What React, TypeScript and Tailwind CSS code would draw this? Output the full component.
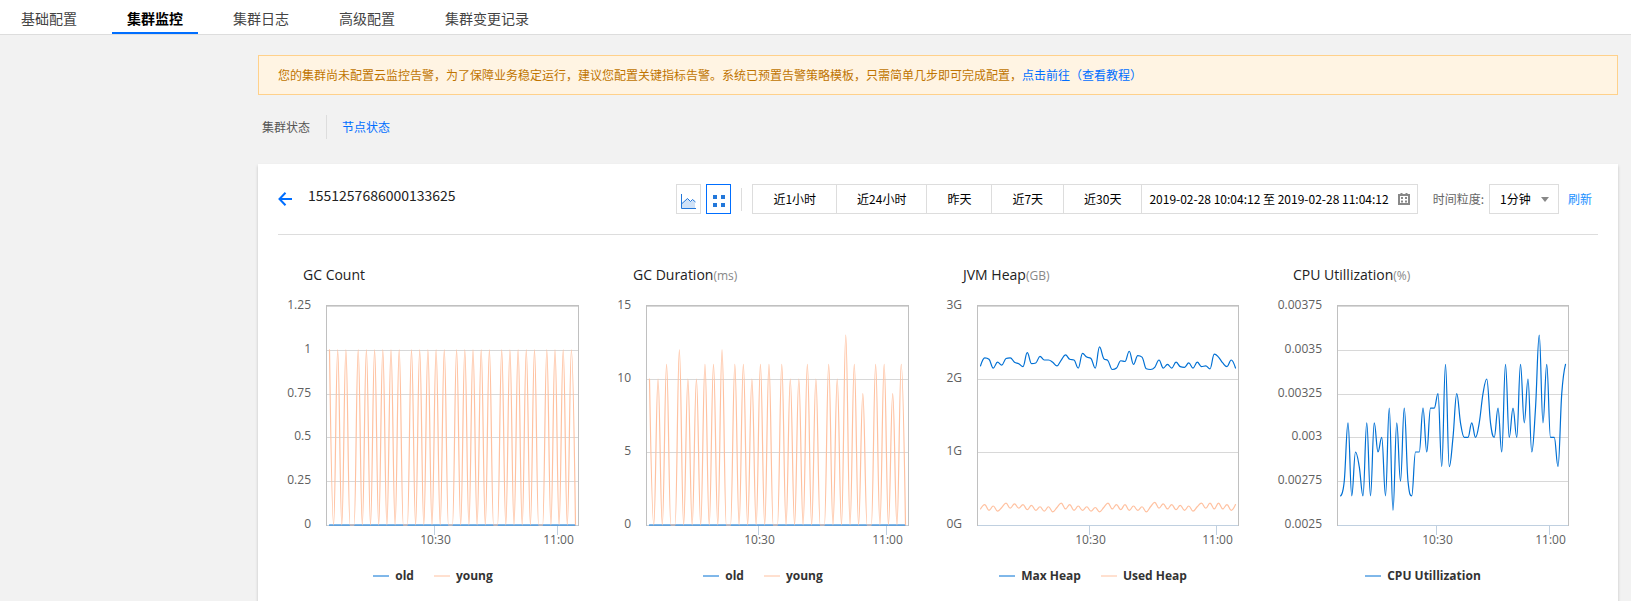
import React from "react";

type Series = {
  name: string;
  color: string;
  data: number[];
};

type ChartProps = {
  title: string;
  unit?: string;
  left: number;
  min: number;
  max: number;
  labels: string[];
  series: Series[];
};

const BLUE = "#0070d4";
const ORANGE = "#ffc1a0";

const PLOT_RIGHT = 300;
const PLOT_TOP = 11;
const PLOT_BOTTOM = 230;
const POINTS = 61;

const zeros: number[] = Array(POINTS).fill(0);

// Turns { minute: value } into a full hour of samples, everything else is 0
const sparse = (values: Record<number, number>) =>
  zeros.map((_, i) => values[i] ?? 0);

const gcCount = sparse(
  Object.fromEntries(
    [
      0, 2, 4, 7, 9, 11, 13, 15, 17, 20, 22, 24, 26, 28, 31, 33, 35, 37, 39, 42,
      44, 46, 48, 50, 53, 55, 57, 59,
    ].map((i) => [i, 1])
  )
);

const gcDuration = sparse({
  0: 10, 2: 10, 4: 11, 7: 12, 9: 10, 11: 10, 13: 11, 15: 11, 17: 12, 20: 11,
  22: 11, 24: 10, 26: 11, 28: 11, 31: 11, 33: 10, 35: 10, 37: 11, 39: 10,
  42: 11, 44: 10, 46: 13, 48: 11, 50: 9, 53: 11, 55: 11, 57: 9, 59: 11,
});

const maxHeap = [
  2.18, 2.29, 2.27, 2.15, 2.23, 2.19, 2.28, 2.29, 2.23, 2.21, 2.17, 2.36, 2.21,
  2.22, 2.31, 2.26, 2.26, 2.23, 2.18, 2.26, 2.33, 2.27, 2.26, 2.15, 2.35, 2.3,
  2.28, 2.15, 2.44, 2.28, 2.25, 2.13, 2.15, 2.25, 2.24, 2.38, 2.2, 2.32, 2.3,
  2.14, 2.13, 2.16, 2.26, 2.15, 2.2, 2.15, 2.23, 2.17, 2.16, 2.22, 2.15, 2.23,
  2.17, 2.18, 2.14, 2.34, 2.3, 2.22, 2.17, 2.26, 2.15,
];

const usedHeap = [
  0.22, 0.28, 0.2, 0.26, 0.19, 0.24, 0.3, 0.23, 0.29, 0.23, 0.28, 0.21, 0.27,
  0.2, 0.25, 0.19, 0.25, 0.18, 0.24, 0.3, 0.22, 0.28, 0.2, 0.26, 0.2, 0.25,
  0.19, 0.24, 0.18, 0.24, 0.3, 0.22, 0.28, 0.21, 0.28, 0.2, 0.26, 0.2, 0.25,
  0.18, 0.25, 0.31, 0.23, 0.29, 0.22, 0.28, 0.21, 0.27, 0.2, 0.26, 0.19, 0.25,
  0.3, 0.23, 0.3, 0.22, 0.3, 0.22, 0.28, 0.2, 0.28,
];

// CPU samples come in steps of 1/12000
const cpu = [
  32, 33, 37, 32, 35, 34, 32, 37, 32, 37, 35, 36, 32, 38, 31, 37, 33, 38, 33,
  32, 35, 35, 38, 35, 38, 38, 39, 34, 41, 34, 36, 39, 37, 36, 36, 37, 36, 37,
  39, 40, 37, 36, 38, 35, 41, 36, 38, 36, 41, 37, 40, 35, 38, 43, 37, 41, 36,
  36, 34, 39, 41,
].map((n) => n / 12000);

const charts: ChartProps[] = [
  {
    title: "GC Count",
    left: 48,
    min: 0,
    max: 1.25,
    labels: ["0", "0.25", "0.5", "0.75", "1", "1.25"],
    series: [
      { name: "old", color: BLUE, data: zeros },
      { name: "young", color: ORANGE, data: gcCount },
    ],
  },
  {
    title: "GC Duration",
    unit: "(ms)",
    left: 38,
    min: 0,
    max: 15,
    labels: ["0", "5", "10", "15"],
    series: [
      { name: "old", color: BLUE, data: zeros },
      { name: "young", color: ORANGE, data: gcDuration },
    ],
  },
  {
    title: "JVM Heap",
    unit: "(GB)",
    left: 39,
    min: 0,
    max: 3,
    labels: ["0G", "1G", "2G", "3G"],
    series: [
      { name: "Max Heap", color: BLUE, data: maxHeap },
      { name: "Used Heap", color: ORANGE, data: usedHeap },
    ],
  },
  {
    title: "CPU Utillization",
    unit: "(%)",
    left: 69,
    min: 0.0025,
    max: 0.00375,
    labels: ["0.0025", "0.00275", "0.003", "0.00325", "0.0035", "0.00375"],
    series: [{ name: "CPU Utillization", color: BLUE, data: cpu }],
  },
];

const tabs = ["基础配置", "集群监控", "集群日志", "高级配置", "集群变更记录"];
const ranges = ["近1小时", "近24小时", "昨天", "近7天", "近30天"];

// Smooth curve through the points that never overshoots a local peak
const splinePath = (pts: [number, number][]) => {
  const s = 1.5;
  let d = `M ${pts[0][0]} ${pts[0][1]}`;
  let [outX, outY] = pts[0];

  for (let i = 1; i < pts.length; i++) {
    const [x, y] = pts[i];
    if (i === pts.length - 1) {
      d += ` C ${outX} ${outY} ${x} ${y} ${x} ${y}`;
      break;
    }
    const [lastX, lastY] = pts[i - 1];
    const [nextX, nextY] = pts[i + 1];
    const leftX = (s * x + lastX) / (s + 1);
    let leftY = (s * y + lastY) / (s + 1);
    const rightX = (s * x + nextX) / (s + 1);
    let rightY = (s * y + nextY) / (s + 1);
    const correction =
      ((rightY - leftY) * (rightX - x)) / (rightX - leftX) + y - rightY;
    leftY += correction;
    rightY += correction;

    if (leftY > lastY && leftY > y) {
      leftY = Math.max(lastY, y);
      rightY = 2 * y - leftY;
    } else if (leftY < lastY && leftY < y) {
      leftY = Math.min(lastY, y);
      rightY = 2 * y - leftY;
    }
    if (rightY > nextY && rightY > y) {
      rightY = Math.max(nextY, y);
      leftY = 2 * y - rightY;
    } else if (rightY < nextY && rightY < y) {
      rightY = Math.min(nextY, y);
      leftY = 2 * y - rightY;
    }
    d += ` C ${outX} ${outY} ${leftX} ${leftY} ${x} ${y}`;
    outX = rightX;
    outY = rightY;
  }
  return d;
};

const Chart = ({ title, unit, left, min, max, labels, series }: ChartProps) => {
  const firstX = left + 3.5;
  const step = (297.5 - firstX) / (POINTS - 1);
  const toY = (v: number) =>
    PLOT_BOTTOM - ((v - min) / (max - min)) * (PLOT_BOTTOM - PLOT_TOP);
  const ticks = [
    { label: "10:30", x: Math.floor(firstX + step * 25.6) + 0.5 },
    { label: "11:00", x: Math.floor(firstX + step * 55.6) + 0.5 },
  ];

  return (
    <div className="pr-5">
      <h3 className="flex h-5 items-baseline pl-[25px] font-['Open_Sans',sans-serif] text-sm leading-5 text-[#222]">
        {title}
        {unit && <span className="text-xs leading-5 text-[#888]">{unit}</span>}
      </h3>
      <svg
        viewBox="0 0 310 260"
        className="mt-[10px] block w-full font-['Open_Sans',sans-serif] text-xs"
        role="img"
        aria-label={title}
      >
        {labels.map((label, i) => {
          const y = Math.round(
            PLOT_BOTTOM - (i / (labels.length - 1)) * (PLOT_BOTTOM - PLOT_TOP)
          );
          return (
            <g key={label}>
              {i > 0 && (
                <path
                  d={`M ${left} ${y + 0.5} H ${PLOT_RIGHT}`}
                  stroke="#d8d8d8"
                />
              )}
              <text x={left - 15} y={y + 3} textAnchor="end" fill="#606060">
                {label}
              </text>
            </g>
          );
        })}
        <rect
          x={left + 0.5}
          y={PLOT_TOP - 0.5}
          width={PLOT_RIGHT - left}
          height={PLOT_BOTTOM - PLOT_TOP + 1}
          fill="none"
          stroke="#c0c0c0"
        />
        <path
          d={`M ${left + 1} ${PLOT_BOTTOM + 0.5} H ${PLOT_RIGHT}`}
          stroke="#c0d0e0"
        />
        {ticks.map((tick) => (
          <g key={tick.label}>
            <path d={`M ${tick.x} 230 V 240`} stroke="#c0d0e0" />
            <text x={tick.x + 1} y={249} textAnchor="middle" fill="#606060">
              {tick.label}
            </text>
          </g>
        ))}
        {series.map((s) => (
          <path
            key={s.name}
            d={splinePath(s.data.map((v, i) => [firstX + i * step, toY(v)]))}
            fill="none"
            stroke={s.color}
            strokeWidth="1.2"
            strokeLinejoin="round"
            strokeLinecap="round"
          />
        ))}
      </svg>
      <div className="mt-[11px] flex justify-center gap-5">
        {series.map((s) => (
          <div key={s.name} className="flex items-center gap-[6px]">
            <svg width="16" height="4" viewBox="0 0 16 4">
              <path d="M 0 2 H 16" stroke={s.color} />
            </svg>
            <span className="font-['Open_Sans',sans-serif] text-xs leading-5 font-bold text-[#333]">
              {s.name}
            </span>
          </div>
        ))}
      </div>
    </div>
  );
};

const App = () => {
  return (
    <div className="flex min-h-screen flex-col bg-[#f2f2f2] font-['Noto_Sans_CJK_SC',sans-serif] text-xs text-black">
      {/* Top tabs */}
      <nav className="flex h-[35px] gap-5 border-b border-[#ddd] bg-white pl-[6px]">
        {tabs.map((tab) => (
          <button
            key={tab}
            className={
              tab === "集群监控"
                ? "border-b-2 border-[#006eff] px-[15px] pt-1 text-sm font-bold text-black"
                : "border-b-2 border-transparent px-[15px] pt-1 text-sm text-[#444]"
            }
          >
            {tab}
          </button>
        ))}
      </nav>

      <main className="flex flex-1 flex-col pt-5 pr-[13px] pl-[258px]">
        {/* Alarm notice */}
        <div className="border border-[#ffd18b] bg-[#fff4e3] px-[19px] py-[10px] leading-[18px] text-[#c07400]">
          您的集群尚未配置云监控告警，为了保障业务稳定运行，建议您配置关键指标告警。系统已预置告警策略模板，只需简单几步即可完成配置，
          <a href="#alarm" className="text-[#006eff]">
            点击前往
          </a>
          <a href="#guide" className="text-[#006eff]">
            （查看教程）
          </a>
        </div>

        {/* Cluster / node switch */}
        <div className="mt-5 flex h-6 items-center pl-1">
          <button className="pr-4 text-[#555]">集群状态</button>
          <button className="h-6 border-l border-[#ddd] pl-[15px] text-[#006eff]">
            节点状态
          </button>
        </div>

        <section className="mt-[25px] flex-1 bg-white px-5 pt-5 shadow-[0_2px_3px_rgba(0,0,0,0.2)]">
          {/* Toolbar */}
          <div className="flex items-start justify-between border-b border-[#ddd] pb-5">
            <div className="flex">
              <button aria-label="返回" className="flex h-[30px] items-center">
                <svg width="14" height="14" viewBox="0 0 14 14">
                  <path
                    d="M 7.5 0.8 L 1.5 7 L 7.5 13.2 M 1.5 7 H 14"
                    fill="none"
                    stroke="#006eff"
                    strokeWidth="2"
                  />
                </svg>
              </button>
              <h2 className="pl-4 text-sm leading-[22px] text-[#222]">
                1551257686000133625
              </h2>
            </div>

            <div className="flex items-center pr-[6px]">
              <button
                aria-label="折线图"
                className="flex h-[30px] w-[25px] items-center justify-center border border-[#ddd] pt-1"
              >
                <svg width="15" height="15" viewBox="0 0 15 15">
                  <path
                    d="M 1 14 V 9.5 L 6.5 4.5 L 9.5 7.5 L 11.5 5.5 L 14 8 V 14 Z"
                    fill="#d0e2f7"
                  />
                  <path
                    d="M 1 9.5 L 6.5 4.5 L 9.5 7.5 L 11.5 5.5 L 14.5 8"
                    fill="none"
                    stroke="#2277da"
                  />
                  <path d="M 0.5 0 V 14.5 H 15" fill="none" stroke="#2277da" />
                </svg>
              </button>
              <button
                aria-label="宫格"
                className="ml-[5px] flex h-[30px] w-[25px] items-center justify-center border border-[#006eff] pt-1"
              >
                <svg width="12" height="12" viewBox="0 0 12 12" fill="#2277da">
                  <rect x="0" y="0" width="4" height="4" />
                  <rect x="8" y="0" width="4" height="4" />
                  <rect x="0" y="8" width="4" height="4" />
                  <rect x="8" y="8" width="4" height="4" />
                </svg>
              </button>
              <div className="mx-[10px] h-[23px] w-px bg-[#ddd]" />

              <div className="flex h-[30px] divide-x divide-[#ddd] border border-[#ddd]">
                {ranges.map((range) => (
                  <button key={range} className="px-5">
                    {range}
                  </button>
                ))}
                <button className="flex items-center gap-[9px] px-[7px]">
                  2019-02-28 10:04:12 至 2019-02-28 11:04:12
                  <svg
                    width="12"
                    height="12"
                    viewBox="0 0 12 12"
                    fill="none"
                    stroke="#888"
                  >
                    <path d="M 1 2 H 11 V 11 H 1 Z" strokeWidth="2" />
                    <path d="M 3.5 0 V 2 M 8.5 0 V 2" strokeWidth="2" />
                    <path d="M 3 5 H 5 M 7 5 H 9 M 3 8.5 H 5 M 7 8.5 H 9" strokeWidth="2" />
                  </svg>
                </button>
              </div>

              <label htmlFor="period" className="ml-[15px] text-[#666]">
                时间粒度:
              </label>
              <div className="relative ml-[5px]">
                <select
                  id="period"
                  className="block h-[30px] w-[70px] appearance-none border border-[#ddd] bg-white pl-[10px]"
                >
                  <option>1分钟</option>
                  <option>5分钟</option>
                </select>
                <svg
                  width="8"
                  height="5"
                  viewBox="0 0 8 5"
                  className="pointer-events-none absolute top-[13px] right-[10px]"
                >
                  <path d="M 0 0 H 8 L 4 5 Z" fill="#888" />
                </svg>
              </div>
              <a href="#refresh" className="ml-[9px] text-[#2090ff]">
                刷新
              </a>
            </div>
          </div>

          {/* Charts */}
          <div className="grid grid-cols-4 pt-[30px]">
            {charts.map((chart) => (
              <Chart key={chart.title} {...chart} />
            ))}
          </div>
        </section>
      </main>
    </div>
  );
};

export default App;
